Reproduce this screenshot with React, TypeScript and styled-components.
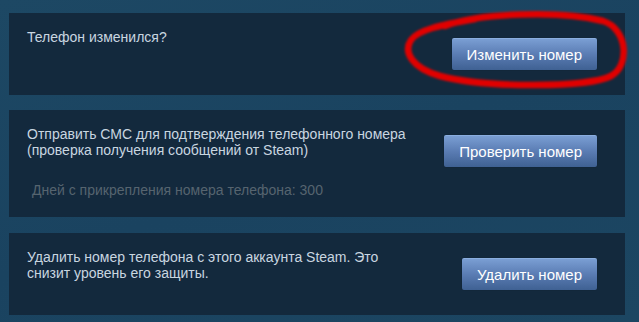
import React from 'react';
import styled, {createGlobalStyle} from 'styled-components';

const Global = createGlobalStyle`
  html, body {
    margin: 0;
    padding: 0;
    background: #1b4460;
  }
  body {
    font-family: "Liberation Sans", Arial, sans-serif;
  }
`;

const Page = styled.div`
  position: relative;
  width: 639px;
  height: 322px;
  box-sizing: border-box;
  padding: 13px 14px 0 9px;
  background: linear-gradient(160deg, #1d4864 0%, #1a4360 50%, #1c4662 100%);
  overflow: hidden;
`;

const Panel = styled.div<{$gap?: number}>`
  display: flex;
  align-items: flex-start;
  box-sizing: border-box;
  min-height: 82px;
  padding: 16px 28px 0 18px;
  margin-bottom: ${p => p.$gap ?? 15}px;
  background: #13293d;
`;

const Info = styled.div<{$width?: number}>`
  width: ${p => p.$width ?? 400}px;
  padding-bottom: 19px;
`;

const Text = styled.div`
  font-size: 14px;
  line-height: 16px;
  color: #c9d6e0;
`;

const Note = styled.div`
  margin-top: 24px;
  padding-left: 5px;
  font-size: 14px;
  line-height: 16px;
  color: #56646f;
`;

const Button = styled.button`
  margin: 9px 0 25px auto;
  height: 32px;
  padding: 0 15px;
  border: none;
  border-top: 1px solid #8aaee0;
  border-radius: 2px;
  background: linear-gradient(to bottom, #7a9ed3 0%, #5a7cb3 50%, #3f6193 100%);
  color: #fff;
  font-family: "Liberation Sans", Arial, sans-serif;
  font-size: 15px;
  white-space: nowrap;
  box-shadow: 0 0 1px rgba(0, 0, 0, 0.4);
`;

const Annotation = styled.svg`
  position: absolute;
  left: 0;
  top: 0;
  pointer-events: none;
`;

function App() {
  return (
    <Page>
      <Global/>
      <Panel>
        <Info>
          <Text>Телефон изменился?</Text>
        </Info>
        <Button>Изменить номер</Button>
      </Panel>
      <Panel $gap={16}>
        <Info>
          <Text>Отправить СМС для подтверждения телефонного номера (проверка получения сообщений от Steam)</Text>
          <Note>Дней с прикрепления номера телефона: 300</Note>
        </Info>
        <Button>Проверить номер</Button>
      </Panel>
      <Panel>
        <Info $width={365}>
          <Text>Удалить номер телефона с этого аккаунта Steam. Это снизит уровень его защиты.</Text>
        </Info>
        <Button>Удалить номер</Button>
      </Panel>
      <Annotation width="639" height="322" viewBox="0 0 639 322">
        <defs>
          <filter id="soft" x="-10%" y="-10%" width="120%" height="120%">
            <feGaussianBlur stdDeviation="0.9"/>
          </filter>
        </defs>
        <path
          d="M 445 26 C 480 13, 560 10, 603 21 C 628 29, 630 66, 611 76 C 588 88, 485 88, 440 76 C 412 68, 403 52, 411 40 C 418 30, 440 25, 475 19"
          fill="none"
          stroke="#e00000"
          strokeWidth="6.5"
          strokeLinecap="round"
          filter="url(#soft)"
        />
      </Annotation>
    </Page>
  );
}

export default App;
